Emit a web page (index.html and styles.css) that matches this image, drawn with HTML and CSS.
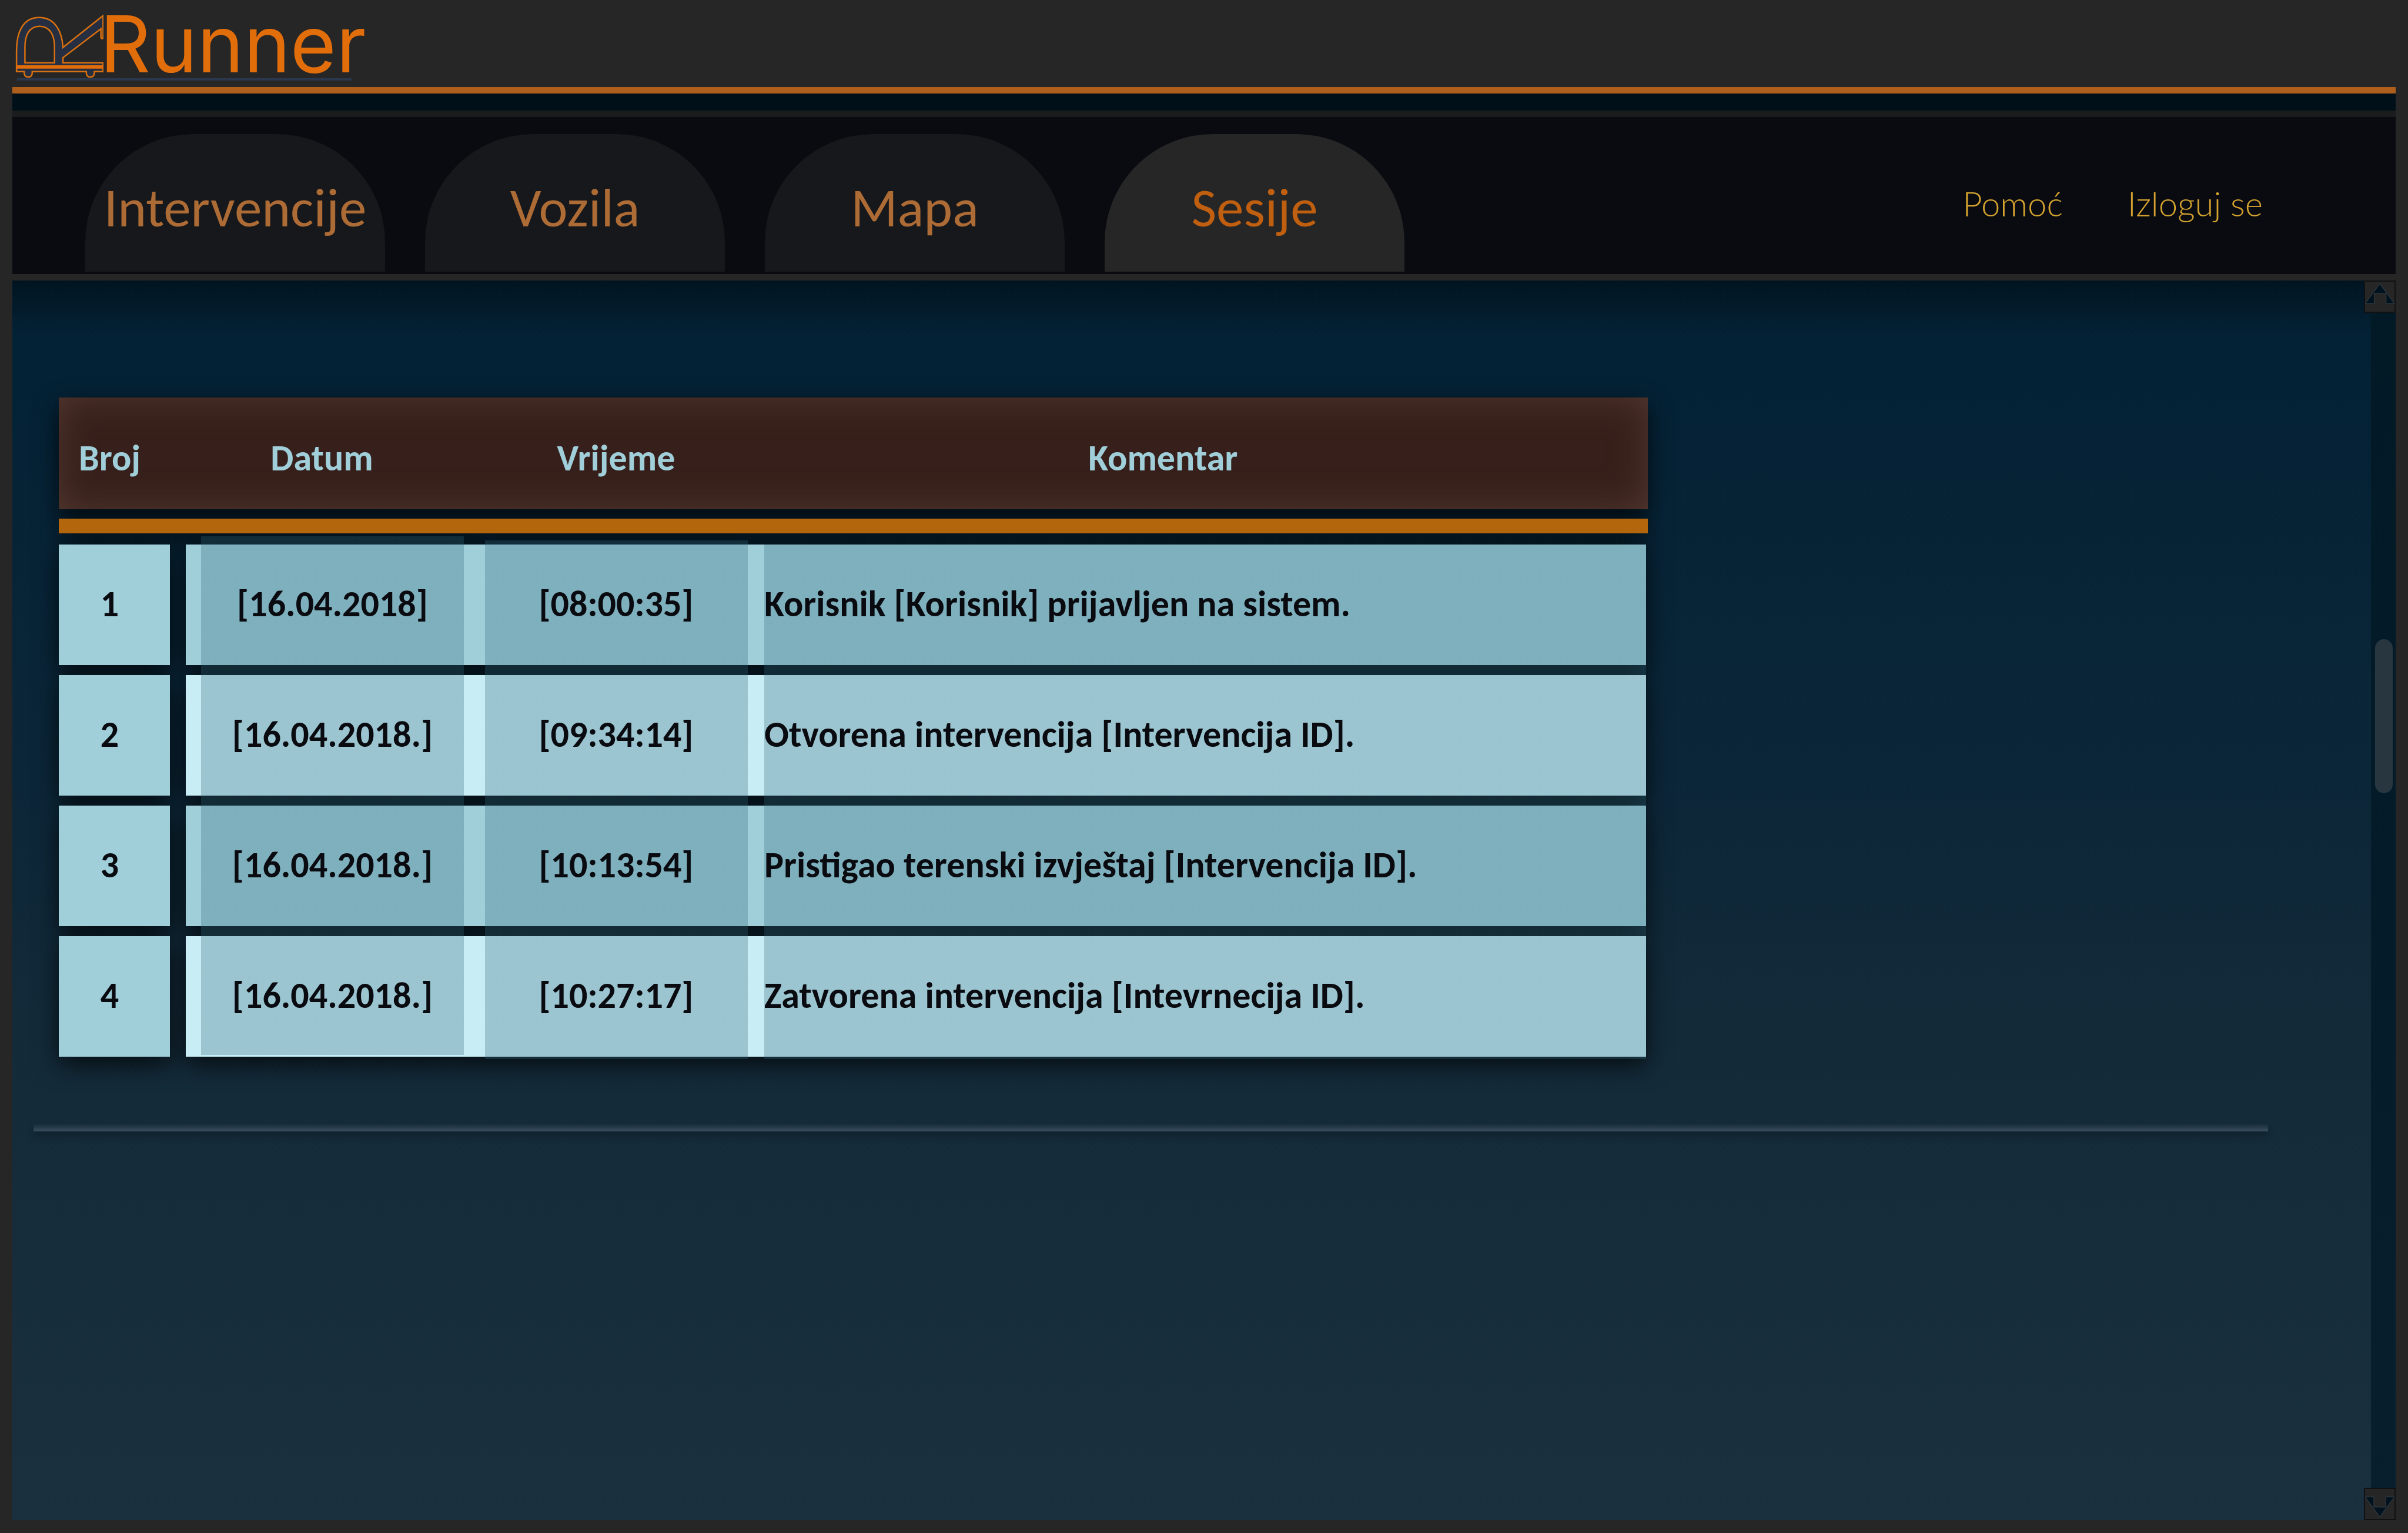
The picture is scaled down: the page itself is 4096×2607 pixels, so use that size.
FILE: index.html
```html
<!DOCTYPE html>
<html lang="bs">
<head>
<meta charset="utf-8">
<title>Runner – Sesije</title>
<link rel="stylesheet" href="styles.css">
</head>
<body>
<header class="brand-bar">
  <a class="logo" href="#">
    <svg class="logo-mark" viewBox="40 40 243 175" aria-hidden="true">
      <path class="mark-body" fill-rule="evenodd" d="M45 197V140C45 90 62 49 107 49S170 90 172 131L282 44V101Q282 107 279 107T276 101V80L172 159V173H282V197H258V200Q258 212 247 212T236 200V197H88V200Q88 212 77 212T66 200V197ZM68 173H149V130C149 98 137 73 108 73S68 98 68 130Z"/>
      <path class="mark-band" d="M45 180H282V189H45Z"/>
    </svg>
    <span class="logo-name">Runner</span>
  </a>
</header>
<nav class="nav">
  <div class="tabs">
    <a class="tab" href="#">Intervencije</a>
    <a class="tab" href="#">Vozila</a>
    <a class="tab" href="#">Mapa</a>
    <a class="tab tab-active" href="#" aria-current="page">Sesije</a>
  </div>
  <div class="account">
    <a href="#">Pomoć</a>
    <a href="#">Izloguj se</a>
  </div>
</nav>
<main class="page">
  <section class="content">
    <table class="log">
      <thead>
        <tr>
          <th class="num" scope="col">Broj</th>
          <th class="date" scope="col">Datum</th>
          <th class="time" scope="col">Vrijeme</th>
          <th class="note" scope="col">Komentar</th>
        </tr>
      </thead>
      <tbody>
        <tr>
          <td class="num"><span>1</span></td>
          <td class="date"><span>[16.04.2018]</span></td>
          <td class="time"><span>[08:00:35]</span></td>
          <td class="note"><span>Korisnik [Korisnik] prijavljen na sistem.</span></td>
        </tr>
        <tr>
          <td class="num"><span>2</span></td>
          <td class="date"><span>[16.04.2018.]</span></td>
          <td class="time"><span>[09:34:14]</span></td>
          <td class="note"><span>Otvorena intervencija [Intervencija ID].</span></td>
        </tr>
        <tr>
          <td class="num"><span>3</span></td>
          <td class="date"><span>[16.04.2018.]</span></td>
          <td class="time"><span>[10:13:54]</span></td>
          <td class="note"><span>Pristigao terenski izvještaj [Intervencija ID].</span></td>
        </tr>
        <tr>
          <td class="num"><span>4</span></td>
          <td class="date"><span>[16.04.2018.]</span></td>
          <td class="time"><span>[10:27:17]</span></td>
          <td class="note"><span>Zatvorena intervencija [Intevrnecija ID].</span></td>
        </tr>
      </tbody>
    </table>
    <hr class="divider">
  </section>
  <aside class="scrollbar">
    <button class="scroll-button" type="button" aria-label="Gore">
      <svg viewBox="3 3 84 84" aria-hidden="true"><path d="M45 8L87 65H63V36H29V65H3Z"/></svg>
    </button>
    <div class="track"><div class="thumb"></div></div>
    <button class="scroll-button" type="button" aria-label="Dolje">
      <svg viewBox="3 3 84 84" aria-hidden="true"><path d="M45 82L3 25H28V54H62V25H87Z"/></svg>
    </button>
  </aside>
</main>
</body>
</html>
```
FILE: styles.css
```css
* {
  box-sizing: border-box;
}

body {
  margin: 0;
  min-height: 100vh;
  display: flex;
  flex-direction: column;
  padding: 0 21px 22px;
  background: #262626;
  color: #0a0b10;
  font-family: Carlito, Lato, sans-serif;
}

a {
  color: inherit;
  text-decoration: none;
}

/* Brand bar */
.brand-bar {
  height: 159px;
  padding: 15px 4px 0;
  border-bottom: 11px solid #af5f1c;
}

.logo {
  display: inline-grid;
  grid-template-columns: auto auto;
  align-items: end;
}

.logo::after {
  content: "";
  grid-column: 1 / -1;
  height: 4px;
  margin: 0 24px 0 4px;
  background: #2a374d;
}

.logo-mark {
  display: block;
  width: 151px;
  height: 109px;
}

.mark-body {
  fill: #262f42;
  stroke: #d9700f;
  stroke-width: 4;
}

.mark-band {
  fill: #e26d0b;
}

.logo-name {
  margin-left: -6px;
  color: #e26d0b;
  font: 400 134px/118px Inter, sans-serif;
}

/* Navigation */
.nav {
  display: flex;
  justify-content: space-between;
  margin-top: 40px;
  padding: 29px 226px 4px 124px;
  background: #0a0b10;
  box-shadow: 0 -11px #1b1c1d, 0 -40px #001019;
}

.tabs {
  display: flex;
  gap: 68px;
}

.tab {
  display: flex;
  align-items: center;
  justify-content: center;
  width: 510px;
  height: 234px;
  padding-top: 16px;
  border-radius: 184px 184px 0 0;
  background: #17181b;
  color: #ad6b35;
  font-size: 93px;
}

.tab-active {
  background: #262626;
  color: #bf5f0f;
}

.account {
  display: flex;
  align-items: center;
  gap: 110px;
  color: #d3a230;
  font-family: Lato, Carlito, sans-serif;
  font-size: 58px;
  font-weight: 300;
}

/* Page */
.page {
  flex: 1;
  display: flex;
  margin-top: 11px;
  background:
    linear-gradient(rgba(0, 8, 12, 0.5), rgba(0, 8, 12, 0) 90px),
    linear-gradient(#022135, #0b2638 40%, #132a39 60%, #1a303e);
}

.content {
  flex: 1;
  padding: 199px 175px 0 36px;
}

/* Session log */
.log {
  display: block;
  width: 71.1%;
  margin-left: 43px;
  font-size: 62px;
  font-weight: 700;
  filter: drop-shadow(0 14px 20px rgba(0, 0, 0, 0.7));
}

.log thead,
.log tbody {
  display: block;
}

.log tr {
  display: grid;
  grid-template-columns: 216px 509px 475px 1fr;
}

.log th,
.log td {
  display: flex;
  align-items: center;
  justify-content: center;
  padding: 0;
}

.log thead tr {
  height: 190px;
  padding-top: 16px;
  background: #37201b;
  box-shadow: inset 0 0 60px #523830;
  color: #a0cfda;
}

.log thead::after {
  content: "";
  display: block;
  height: 25px;
  margin-top: 16px;
  background: #b4660c;
}

.log tbody {
  position: relative;
  display: grid;
  gap: 17px;
  margin: 19px 3px 0 0;
}

/* Translucent column bands that run across all rows */
.log tbody::after {
  --band: linear-gradient(rgba(50, 105, 122, 0.3), rgba(50, 105, 122, 0.3));
  content: "";
  position: absolute;
  inset: -14px 0 -4px;
  background:
    var(--band) 242px 0 / 447px calc(100% - 7px) no-repeat,
    var(--band) 725px 7px / 447px calc(100% - 7px) no-repeat,
    var(--band) 1200px 14px / calc(100% - 1200px) calc(100% - 14px) no-repeat;
}

.log tbody tr {
  height: 205px;
}

.log td {
  padding-bottom: 4px;
  background: #a0cfda;
}

.log tr:nth-child(even) td:not(.num) {
  background: #c9edf5;
}

.log td span {
  position: relative;
  z-index: 1;
}

.log .num {
  margin-right: 27px;
  padding-right: 16px;
}

.log .date {
  padding-left: 26px;
  padding-right: 36px;
}

.log .time {
  padding-right: 29px;
}

.log td.note {
  justify-content: flex-start;
}

.log th.date {
  padding-right: 72px;
}

.log th.note {
  padding-right: 146px;
}

.divider {
  height: 13px;
  margin: 114px 0 0;
  border: 0;
  border-bottom: 1px solid #2f5965;
  background: linear-gradient(rgba(60, 75, 92, 0), #384a59);
  box-shadow: 0 8px 12px rgba(0, 12, 20, 0.3);
}

/* Scrollbar */
.scrollbar {
  display: flex;
  flex-direction: column;
  width: 54px;
  margin-left: -12px;
}

.scroll-button {
  width: 54px;
  height: 55px;
  padding: 0;
  border: 2px solid #0f1114;
  background: #262626;
}

.scroll-button svg {
  display: block;
  width: 100%;
  height: 100%;
}

.scroll-button path {
  fill: #00121d;
  stroke: #303a42;
  stroke-width: 2;
}

.track {
  flex: 1;
  display: flex;
  flex-direction: column;
  margin-left: 12px;
  padding: 0 5px 0 7px;
  background: linear-gradient(#021926, #041b29 50%, #081f2d);
}

.track::before {
  content: "";
  flex: 555;
}

.track::after {
  content: "";
  flex: 1182;
}

.thumb {
  height: 262px;
  border-radius: 15px;
  background: #283640;
}
```
